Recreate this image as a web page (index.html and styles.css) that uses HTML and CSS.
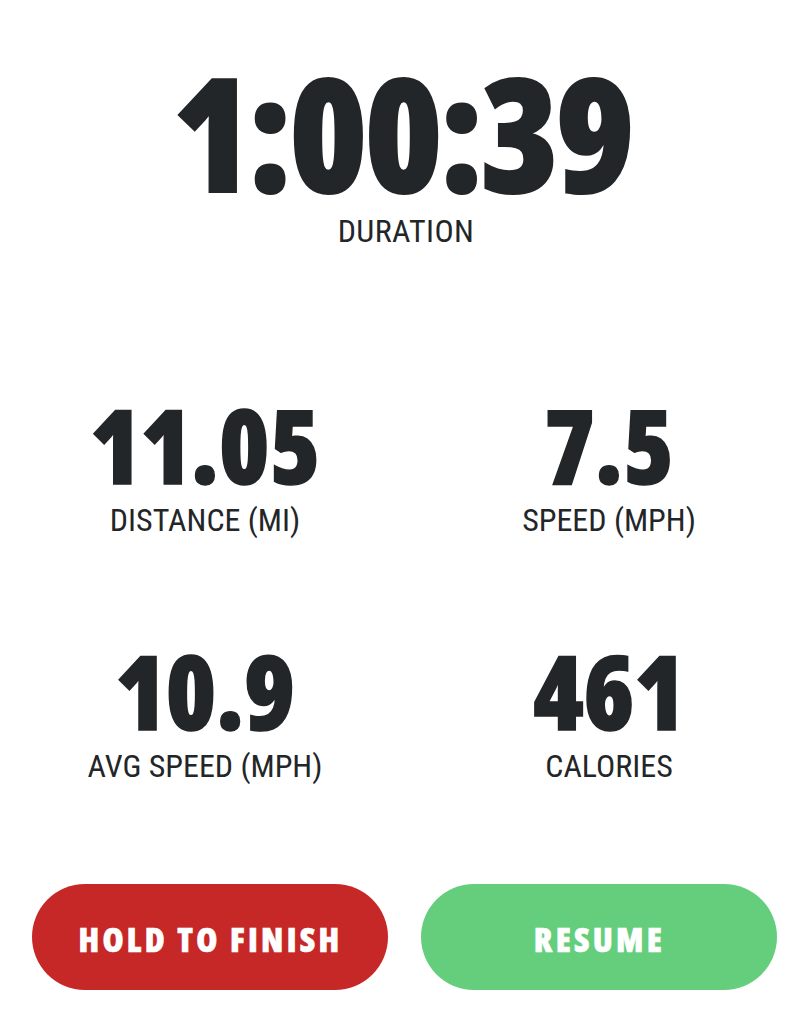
FILE: index.html
```html
<!DOCTYPE html>
<html lang="en">
<head>
    <meta charset="UTF-8">
    <meta name="viewport" content="width=device-width, initial-scale=1.0">
    <title>Workout Paused</title>
    <link rel="stylesheet" href="styles.css">
</head>
<body>

<div class="screen">
    <div class="stat stat-main">
        <div class="value">1:00:39</div>
        <div class="label">DURATION</div>
    </div>

    <div class="stat-grid">
        <div class="stat">
            <div class="value">11.05</div>
            <div class="label">DISTANCE (MI)</div>
        </div>
        <div class="stat">
            <div class="value">7.5</div>
            <div class="label">SPEED (MPH)</div>
        </div>
        <div class="stat">
            <div class="value">10.9</div>
            <div class="label">AVG SPEED (MPH)</div>
        </div>
        <div class="stat">
            <div class="value">461</div>
            <div class="label">CALORIES</div>
        </div>
    </div>

    <div class="actions">
        <button class="btn btn-finish">HOLD TO FINISH</button>
        <button class="btn btn-resume">RESUME</button>
    </div>
</div>

</body>
</html>
```
FILE: styles.css
```css
body {
    margin: 0;
    background: #fff;
    color: #232628;
}
.screen {
    display: flex;
    flex-direction: column;
    height: 1024px;
}
.stat {
    display: flex;
    flex-direction: column;
    align-items: center;
}
.value {
    font-family: "Open Sans", sans-serif;
    font-weight: 800;
    font-stretch: 75%;
    line-height: 1;
    white-space: nowrap;
    -webkit-text-stroke: 1.5px currentColor; /* a touch heavier */
}
.label {
    font-family: "Roboto Condensed", Roboto, sans-serif;
    font-size: 32px;
    line-height: 1;
    margin-top: 8px;
}
.stat-main {
    padding-top: 52px;
    margin-left: 4px;
}
.stat-main .value {
    font-size: 158px;
    letter-spacing: -3px;
    -webkit-text-stroke-width: 2px;
}
.stat-main .label {
    margin-top: 5px;
    margin-left: 8px;
    letter-spacing: 0.4px;
}
.stat-grid {
    display: grid;
    grid-template-columns: 1fr 1fr;
    column-gap: 22px;
    row-gap: 104px;
    padding-left: 14px;
    margin-top: 147px;
}
.stat-grid .value {
    font-size: 102px;
}
.actions {
    display: flex;
    gap: 33px;
    padding: 0 23px 0 32px;
    margin-top: auto;
    margin-bottom: 34px;
}
.btn {
    flex: 1;
    height: 106px;
    padding: 4px 0 0 1px;
    border: none;
    border-radius: 53px;
    color: #fff;
    font-family: "Open Sans", sans-serif;
    font-weight: 800;
    font-stretch: 87.5%;
    font-size: 34px;
    letter-spacing: 3.3px;
    -webkit-text-stroke: 0.6px currentColor;
    cursor: pointer;
}
.btn-finish {
    background-color: #c62828;
}
.btn-resume {
    background-color: #64ce7d;
}
```
